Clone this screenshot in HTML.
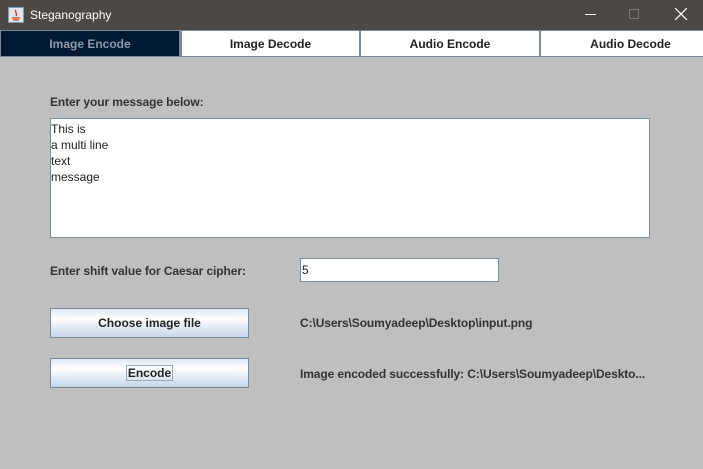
<!DOCTYPE html>
<html><head><style>
*{margin:0;padding:0;box-sizing:border-box}
body{width:703px;height:469px;background:#bfbfbf;font-family:"Liberation Sans",Arial,sans-serif;position:relative;overflow:hidden}
.title{position:absolute;left:0;top:0;width:703px;height:30px;background:#4b4845;color:#fff;font-size:12px}
.tabs{position:absolute;top:30px;left:0;width:703px;height:27px;background:#7a8a99}
.tab{position:absolute;top:0;height:27px;background:#fff;text-align:center;font-weight:bold;font-size:12px;line-height:27px;color:#222;border-top:1px solid #7a8a99;border-bottom:1px solid #7a8a99}
.tab.sel{background:#001a33;color:#8a9aaa;border:1px solid #7a8a99}
.lbl{position:absolute;font-size:12px;font-weight:bold;color:#333;letter-spacing:-0.1px}
.btn{position:absolute;width:199px;height:30px;border:1px solid #7a8a99;background:linear-gradient(#dde8f3,#fff 35%,#e6eef7 60%,#c5d6e8);text-align:center;font-size:12px;font-weight:bold;color:#222;line-height:28px}
</style></head><body>
<div class="title">
<svg style="position:absolute;left:8px;top:7px" width="16" height="16"><rect x="0.5" y="0.5" width="15" height="15" fill="#dfe6ef" stroke="#8899aa"/><path d="M8 3c-2 2 2 3 0 6M4 11h8M5 13h6" stroke="#d04010" stroke-width="1.3" fill="none"/></svg>
<span style="position:absolute;left:30px;top:8px">Steganography</span>
<div style="position:absolute;left:585px;top:14px;width:11px;height:1px;background:#fff"></div>
<div style="position:absolute;left:629px;top:9px;width:10px;height:10px;border:1px solid #777"></div>
<svg style="position:absolute;left:675px;top:8px" width="12" height="12"><path d="M0 0L12 12M12 0L0 12" stroke="#fff" stroke-width="1.2"/></svg>
</div>
<div class="tabs">
<div class="tab sel" style="left:0;width:180px">Image Encode</div>
<div class="tab" style="left:182px;width:177px">Image Decode</div>
<div class="tab" style="left:361px;width:178px">Audio Encode</div>
<div class="tab" style="left:541px;width:179px">Audio Decode</div>
</div>
<div class="lbl" style="left:50px;top:95px">Enter your message below:</div>
<div style="position:absolute;left:50px;top:118px;width:600px;height:120px;background:#fff;border:1px solid #7a8a99;box-shadow:inset 0 0 0 1px #fff;font-size:12px;color:#222;line-height:16px;padding:2px 0 0 0">This is<br>a multi line<br>text<br>message</div>
<div class="lbl" style="left:50px;top:264px">Enter shift value for Caesar cipher:</div>
<div style="position:absolute;left:300px;top:258px;width:199px;height:24px;background:#fff;border:1px solid #7a8a99;font-size:12px;padding:4px 1px;color:#222">5</div>
<div class="btn" style="left:50px;top:308px">Choose image file</div>
<div class="lbl" style="left:300px;top:316px">C:\Users\Soumyadeep\Desktop\input.png</div>
<div class="btn" style="left:50px;top:358px"><span style="border:1px solid #99aabb;padding:0 1px">Encode</span></div>
<div class="lbl" style="left:300px;top:367px">Image encoded successfully: C:\Users\Soumyadeep\Deskto...</div>
</body></html>
